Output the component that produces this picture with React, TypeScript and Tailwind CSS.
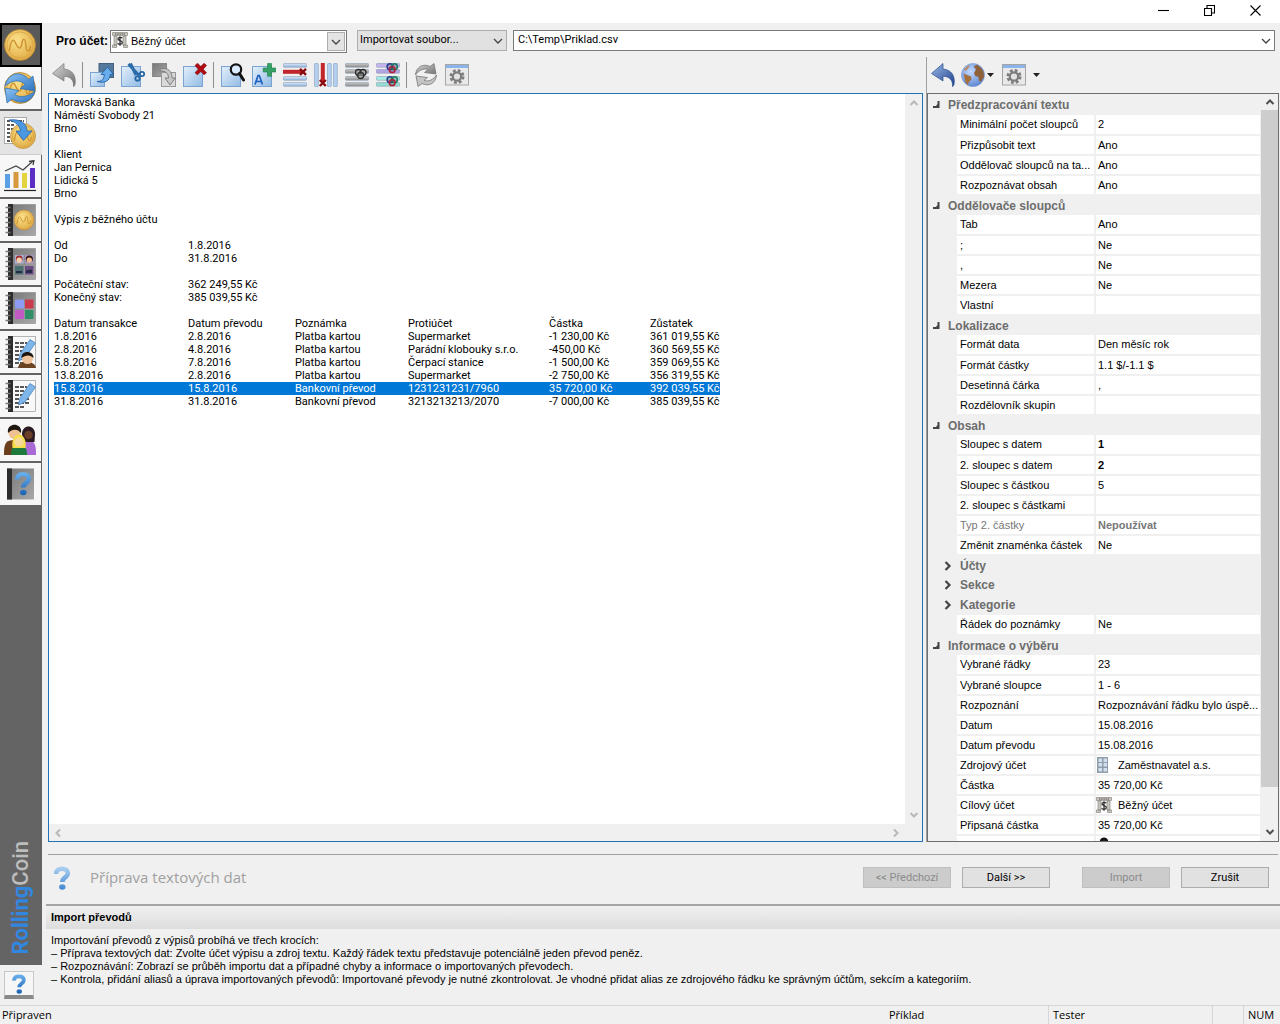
import type { ReactNode } from 'react';

const TAHOMA = "font-['Roboto','Noto_Sans',sans-serif]";
const SANS = "font-['Liberation_Sans',Arial,sans-serif]";

function Svg({ children, size = 'size-6' }: { children: ReactNode; size?: string }) {
  return (
    <svg viewBox="0 0 24 24" className={`${size} shrink-0`} aria-hidden="true">
      {children}
    </svg>
  );
}

function Defs() {
  return (
    <svg width="0" height="0" className="absolute" aria-hidden="true">
      <defs>
        <linearGradient id="sheet" x1="0" y1="0" x2="1" y2="1">
          <stop offset="0" stopColor="#e4f0fc" />
          <stop offset="1" stopColor="#92bbe4" />
        </linearGradient>
        <linearGradient id="bluearrow" x1="0" y1="0" x2="1" y2="1">
          <stop offset="0" stopColor="#8cc4f4" />
          <stop offset="1" stopColor="#2f74c0" />
        </linearGradient>
        <linearGradient id="navy" x1="0" y1="0" x2="1" y2="1">
          <stop offset="0" stopColor="#9cb8e8" />
          <stop offset="1" stopColor="#1d3f8c" />
        </linearGradient>
        <linearGradient id="grayarrow" x1="0" y1="0" x2="1" y2="1">
          <stop offset="0" stopColor="#d8d8d8" />
          <stop offset="1" stopColor="#6e6e6e" />
        </linearGradient>
        <linearGradient id="bar" x1="0" y1="0" x2="0" y2="1">
          <stop offset="0" stopColor="#d9e9fa" />
          <stop offset="1" stopColor="#8fb1d8" />
        </linearGradient>
        <linearGradient id="graybar" x1="0" y1="0" x2="0" y2="1">
          <stop offset="0" stopColor="#c9c9c9" />
          <stop offset="1" stopColor="#8b8b8b" />
        </linearGradient>
        <linearGradient id="cover" x1="0" y1="0" x2="1" y2="1">
          <stop offset="0" stopColor="#777" />
          <stop offset="1" stopColor="#a8a8a8" />
        </linearGradient>
        <radialGradient id="gold" cx="0.4" cy="0.35" r="0.8">
          <stop offset="0" stopColor="#fbe08a" />
          <stop offset="1" stopColor="#dca43a" />
        </radialGradient>
        <radialGradient id="ocean" cx="0.4" cy="0.35" r="0.7">
          <stop offset="0" stopColor="#c4daff" />
          <stop offset="1" stopColor="#5b84d2" />
        </radialGradient>
        <linearGradient id="question" gradientUnits="userSpaceOnUse" x1="12" y1="0" x2="12" y2="24">
          <stop offset="0" stopColor="#6fb4ee" />
          <stop offset="1" stopColor="#1760b4" />
        </linearGradient>
        <linearGradient id="paleq" gradientUnits="userSpaceOnUse" x1="12" y1="0" x2="12" y2="24">
          <stop offset="0" stopColor="#b4d4f2" />
          <stop offset="1" stopColor="#3f86d2" />
        </linearGradient>
      </defs>
    </svg>
  );
}

/* ---------- toolbar icons ---------- */

const Undo = ({ fill = 'url(#grayarrow)', stroke = '#777' }: { fill?: string; stroke?: string }) => (
  <Svg>
    <path d="M0.500 10.500 12 0.500v5.500c8 0.800 12.500 6 11 15.500-0.300 1-0.800 1.700-1.500 2.200C22 17 18.500 13.500 12 13.300v4.700z" fill={fill} stroke={stroke} strokeWidth="0.700" />
  </Svg>
);
const Sheet = () => <rect x="0.500" y="3.500" width="19" height="20" fill="url(#sheet)" stroke="#7aa3cf" />;
const MoveOut = () => (
  <Svg>
    <rect x="9" y="0.500" width="14.500" height="14" fill="#54789c" stroke="#44617f" />
    <rect x="0.500" y="9.500" width="14" height="14" fill="url(#sheet)" stroke="#7aa3cf" />
    <path d="M7 18.500c5 0 7-2 7.300-7H11l6.500-7.500 6 7.500h-3.200c-0.500 7-6 9-13.300 7z" fill="#69aceb" stroke="#2462a4" strokeWidth="0.900" />
  </Svg>
);
const Cut = () => (
  <Svg>
    <Sheet />
    <path d="M7.500 1 18 12.500M9.500 0.500 15 12" fill="none" stroke="#2b6ca8" strokeWidth="3" />
    <circle cx="21" cy="11" r="2.200" fill="none" stroke="#2466a4" strokeWidth="1.800" />
    <circle cx="16.500" cy="15.500" r="2.200" fill="none" stroke="#2466a4" strokeWidth="1.800" />
  </Svg>
);
const CopyGray = () => (
  <Svg>
    <rect x="0.500" y="0.500" width="14" height="13" fill="url(#cover)" stroke="#888" />
    <rect x="9.500" y="9.500" width="14" height="14" fill="#d9d9d9" stroke="#999" />
    <path d="M8 6c8-2 12 2 12 9h3.300L18 22l-5-7h3.500C16.500 10 13 7.500 8 8z" fill="#c6c6c6" stroke="#777" strokeWidth="0.900" />
  </Svg>
);
const Remove = () => (
  <Svg>
    <Sheet />
    <path d="m12 2.500 2.500-2.300 3.300 3.200 3.400-3.200L23.500 2.500l-3.300 3.700 3.300 3.600-2.400 2-3.300-3.200-3.300 3.200-2.500-2 3.300-3.600z" fill="#b00c12" stroke="#7e0509" strokeWidth="0.600" />
  </Svg>
);
const Find = () => (
  <Svg>
    <Sheet />
    <circle cx="15" cy="6.500" r="5.200" fill="#dcecff" stroke="#151515" strokeWidth="2.200" />
    <path d="m18.500 10.500 4 6.500" stroke="#111" strokeWidth="3" strokeLinecap="round" />
  </Svg>
);
const AddText = () => (
  <Svg>
    <Sheet />
    <path d="m3 21.500 3-9h1.300l3.200 9M4 18.500h5.500" fill="none" stroke="#1f5fc0" strokeWidth="1.700" />
    <path d="M15.500 0.500h4v4.500h4.300v4h-4.300v4.300h-4V9h-4.300V5h4.300z" fill="#35a164" stroke="#1f7d48" strokeWidth="0.600" />
  </Svg>
);
const RowBar = ({ y, fill = 'url(#bar)' }: { y: number; fill?: string }) => (
  <rect x="0.300" y={y} width="23.400" height="3.800" rx="1" fill={fill} stroke="#7c92ac" strokeWidth="0.500" />
);
const RemoveRow = () => (
  <Svg>
    <RowBar y={0.5} /><RowBar y={13.5} /><RowBar y={19.5} />
    <rect x="0" y="6.800" width="19" height="4" fill="#c2252b" />
    <path d="m17 5.800 6 6m0-6-6 6" stroke="#8a0a0e" strokeWidth="2.400" />
  </Svg>
);
const RemoveCol = () => (
  <Svg>
    {[0.500, 13.500, 19.500].map((x) => (
      <rect key={x} x={x} y="0.300" width="3.800" height="23.400" rx="1" fill="#b5d0ef" stroke="#6f90b8" strokeWidth="0.500" />
    ))}
    <rect x="6.800" y="0" width="4" height="19" fill="#c2252b" />
    <path d="m5.800 17 6 6m0-6-6 6" stroke="#8a0a0e" strokeWidth="2.400" />
  </Svg>
);
const GroupRow = () => (
  <Svg>
    {[0.5, 6.5, 13.5, 19.5].map((y) => <RowBar key={y} y={y} fill="url(#graybar)" />)}
    <g fill="#aaa" fillOpacity="0.500" stroke="#2b2b2b" strokeWidth="1.300">
      <circle cx="13.500" cy="9.500" r="3" /><circle cx="18" cy="9.500" r="3" /><circle cx="15.700" cy="12.500" r="3" />
    </g>
  </Svg>
);
const GroupMulti = () => (
  <Svg>
    <RowBar y={0.5} fill="#c3b4ee" /><RowBar y={6.5} fill="#b3a4e4" />
    <RowBar y={13.5} fill="#a6ebe2" /><RowBar y={19.5} fill="#97dcd2" />
    {[0, 13].map((dy) => (
      <g key={dy} fill="#445" fillOpacity="0.250" strokeWidth="1.500">
        <circle cx="14" cy={3.7 + dy} r="2.900" stroke="#273c8c" />
        <circle cx="18.500" cy={3.7 + dy} r="2.900" stroke="#1c7a5a" />
        <circle cx="16.200" cy={6.7 + dy} r="2.900" stroke="#b2203a" />
      </g>
    ))}
  </Svg>
);
const RefreshGray = () => (
  <Svg>
    <path d="M1.500 12C2 4 9 0 16 3.500L20 0.500 22 11 10.500 9.500l3.500-3C9 5 4.500 7.500 1.500 12z" fill="url(#grayarrow)" stroke="#777" strokeWidth="0.800" />
    <path d="M22.500 12C22 20 15 24 8 20.500L4 23.500 2 13l11.500 1.500-3.500 3c5 1.500 9.500-1 12.500-5.500z" fill="#c4c4c4" stroke="#777" strokeWidth="0.800" />
  </Svg>
);
const GearWindow = () => (
  <Svg>
    <rect x="0.500" y="1.500" width="23" height="20.500" fill="#e9e9e9" stroke="#a5a5a5" />
    <rect x="1" y="2" width="22" height="3" fill="#8db4ea" />
    <circle cx="12" cy="13.500" r="6.200" fill="none" stroke="#7c7c7c" strokeWidth="2.600" strokeDasharray="2.800 2.070" />
    <circle cx="12" cy="13.500" r="4.200" fill="#e2e2e2" stroke="#7c7c7c" strokeWidth="2.200" />
  </Svg>
);
const Globe = () => (
  <Svg>
    <circle cx="12" cy="12" r="11.500" fill="url(#ocean)" stroke="#7593cc" strokeWidth="0.600" />
    <path d="M2.500 10.500 6 12l4 1.500 0.500 3L7.500 19.500 7 22.500 4.500 19 3.500 15z" fill="#a3703e" />
    <path d="M3 6.500 6.500 3 9 2 7.500 5 4.500 8z" fill="#b98a5c" />
    <path d="M12.500 3.500 16 1.800l4 3 2.500 4 0.500 5-3 5-2-1-0.500-4-3-0.500-1.500-3 2-4z" fill="#8f6138" />
  </Svg>
);

/* ---------- small icons ---------- */

const Chevron = ({ className = '', bold = false }: { className?: string; bold?: boolean }) => (
  <svg viewBox="0 0 10 6" className={`h-1.5 w-2.5 ${className}`} aria-hidden="true">
    <path d={bold ? 'm1.500 1 3.500 3.500L8.500 1' : 'm1 1 4 4 4-4'} fill="none" stroke="currentColor" strokeWidth={bold ? 2 : 1.3} />
  </svg>
);
const BankIcon = () => (
  <svg viewBox="0 0 16 16" className="size-4 shrink-0" aria-hidden="true">
    <path d="M0.500 0.500h15v3h-15zM2 4h3v9H2zM11 4h3v9h-3zM0.500 13h4v2.500h-4zM11.500 13h4v2.500h-4z" fill="#c9c5c0" stroke="#8b8680" strokeWidth="0.700" />
    <path d="M3 2h10" stroke="#555" strokeWidth="1.200" strokeDasharray="1.500 0.700" />
    <path d="M10.300 6.200C9.500 5 6 5 6 7s4.300 1.400 4.300 3.500S6.500 12.700 5.700 11.300M8 4.300v9.400" fill="none" stroke="#333" strokeWidth="1.300" />
  </svg>
);
const BuildingIcon = () => (
  <svg viewBox="0 0 16 16" className="size-4 shrink-0" aria-hidden="true">
    <rect x="1" y="0" width="11" height="16" fill="#8f9caa" />
    <path d="M2.500 1.500h3.500v3.500H2.500zM7.500 1.500H11v3.500H7.500zM2.500 6H6v3.500H2.500zM7.500 6H11v3.500H7.500zM2.500 11H6v3.500H2.500zM7.500 11H11v3.500H7.500z" fill="#d2e0ee" />
  </svg>
);
const PersonIcon = () => (
  <svg viewBox="0 0 16 16" className="size-4 shrink-0" aria-hidden="true">
    <path d="M3.500 7c0-5 2-6.500 4.500-6.500S12.500 2 12.500 7v3h-9z" fill="#111" />
    <circle cx="8" cy="6.500" r="2.800" fill="#d9b08c" />
  </svg>
);
const QuestionMark = ({ fill = 'url(#question)' }: { fill?: string }) => (
  <>
    <path d="M6.200 8C6 4.200 8.500 2.800 12 2.800c3.500 0 5.800 1.600 5.800 4.400 0 4.300-5.500 4-5.500 8.800" fill="none" stroke={fill} strokeWidth="4.600" />
    <ellipse cx="12.300" cy="21" rx="3.200" ry="2.700" fill={fill} />
  </>
);

/* ---------- side bar icons (32 x 32) ---------- */

const Big = ({ children }: { children: ReactNode }) => (
  <svg viewBox="0 0 32 32" className="size-8 shrink-0" aria-hidden="true">{children}</svg>
);
const Coin = ({ x = 16, y = 16, r = 15.5 }: { x?: number; y?: number; r?: number }) => (
  <g transform={`translate(${x} ${y}) scale(${r / 16})`}>
    <circle r="16" fill="url(#gold)" stroke="#b98328" strokeWidth="0.800" />
    <circle r="13.500" fill="none" stroke="#d39c3b" strokeWidth="0.700" />
    <path d="M-11 6c1-8 2-11 4-11 2.500 0 3 8 6.500 8S1-6 4-6s1 12 4 12 2-3 3-5" fill="none" stroke="#cf9632" strokeWidth="1.600" />
  </g>
);
const Book = ({ children, page = false }: { children?: ReactNode; page?: boolean }) => (
  <Big>
    <rect x="5" y="0.500" width="26.500" height="31" fill={page ? '#f8f8f8' : 'url(#cover)'} stroke="#888" strokeWidth="0.600" />
    <rect x="4" y="0" width="5" height="32" fill="#2d2d2d" />
    <path d="M1.500 3.500h5m-5 5h5m-5 5h5m-5 5h5m-5 5h5m-5 5h5" stroke="#777" strokeWidth="1.700" />
    {children}
  </Big>
);
const Lines = () => (
  <path d="M11 7h12M11 11h10M11 15h10M11 19h14M11 23h14M11 27h9" stroke="#222" strokeWidth="1.500" strokeDasharray="4 1" />
);
const Pencil = () => (
  <path d="m14.500 25 1.500-7L26 3.500l5.500 3.500L21 22z" fill="#7fb6ea" stroke="#4a86c2" strokeWidth="0.800" />
);

const SIDE: { label: string; icon: ReactNode; state?: 'current' | 'hover' }[] = [
  { label: 'Přehled', state: 'current', icon: <Big><Coin /></Big> },
  {
    label: 'Synchronizace',
    icon: (
      <Big>
        <Coin />
        <path d="M1 14C3 4 12-1 20 3.500c2 1 3.500 2.500 4.500 4L29 4l2 15-15-2.500 5-4C16 7 8 8 1 14z" fill="url(#bluearrow)" stroke="#2d6cb0" strokeWidth="0.700" />
        <path d="M31 19c-2 9-10 13-18 10.500-2-0.500-3.500-1.500-5-2.500l-5 4L1 16l14 2.500-4.500 4C16 26 24 25 31 19z" fill="url(#bluearrow)" stroke="#2d6cb0" strokeWidth="0.700" />
      </Big>
    ),
  },
  {
    label: 'Import převodů',
    state: 'hover',
    icon: (
      <Big>
        <rect x="0.500" y="0.500" width="22" height="26" fill="#fff" stroke="#aaa" />
        <path d="M3 4h17M3 8h8M3 12h7M3 16h5M3 20h5M3 24h6" stroke="#222" strokeWidth="1.600" strokeDasharray="3 1" />
        <Coin x={19} y={19} r={12.5} />
        <path d="M5 3c11-1.500 18 3 18 11h5l-8.500 9.500L12 14h4.500C16 9 12 5 5 3z" fill="#4b97e2" stroke="#2763a8" strokeWidth="0.800" />
      </Big>
    ),
  },
  {
    label: 'Grafy',
    icon: (
      <Big>
        <rect x="1" y="14" width="5" height="14" fill="#5aa0e4" />
        <rect x="9.500" y="12" width="5" height="16" fill="#d69a3c" />
        <rect x="18" y="13" width="5" height="15" fill="#e2d43c" />
        <rect x="26" y="8" width="5" height="20" fill="#5a2cc4" />
        <path d="m1 11 11-5 7 4L29 1m-4 0.500L30 0.500 29 5" fill="none" stroke="#444" strokeWidth="1.300" />
        <path d="M0 30.500h32" stroke="#222" strokeWidth="1.200" />
      </Big>
    ),
  },
  { label: 'Účty', icon: <Book><Coin x={20} y={16} r={10} /></Book> },
  {
    label: 'Osoby',
    icon: (
      <Book>
        <rect x="11" y="7" width="8.500" height="8.500" fill="#a9b2dd" /><rect x="21" y="7" width="8.500" height="8.500" fill="#a895c8" />
        <rect x="11" y="18" width="8.500" height="8.500" fill="#4a6f70" /><rect x="21" y="18" width="8.500" height="8.500" fill="#6a4b83" />
        <circle cx="15.200" cy="11" r="3.400" fill="#a32b2b" /><circle cx="15.200" cy="12.300" r="2.700" fill="#f2cfb0" />
        <circle cx="25.300" cy="11" r="3.600" fill="#34160e" /><circle cx="25.300" cy="12.300" r="2.700" fill="#eebd98" />
        <path d="M12 23h6v2h-6zM22 22.500l6-1v3.500h-6z" fill="#252b44" />
      </Book>
    ),
  },
  {
    label: 'Kategorie',
    icon: (
      <Book>
        <rect x="11" y="7.500" width="9" height="9" rx="0.800" fill="#8f9cf4" /><rect x="21" y="7.500" width="8.500" height="9" rx="0.800" fill="#cc3a4c" />
        <rect x="11" y="18" width="9" height="9" rx="0.800" fill="#c35ac4" /><rect x="21" y="18" width="8.500" height="9" rx="0.800" fill="#2f9068" />
      </Book>
    ),
  },
  {
    label: 'Aliasy',
    icon: (
      <Book page>
        <Lines /><Pencil />
        <path d="M14 32c1-5 3-6 8-6s9 1 10 6z" fill="#6b4322" />
        <circle cx="23.500" cy="22.500" r="5.500" fill="#efc49c" />
        <path d="M17.500 22c-1-8 12.500-8 12 0-3-3.500-8-3.500-12 0z" fill="#1e1410" />
      </Book>
    ),
  },
  { label: 'Poznámky', icon: <Book page><Lines /><Pencil /></Book> },
  {
    label: 'Uživatelé',
    icon: (
      <Big>
        <path d="M0 31c0-12 2-15 10-15s8 3 9 15z" fill="#6b3f1c" />
        <circle cx="10.500" cy="9" r="6" fill="#edc193" /><path d="M4 9C2-2 19-2 17 9c-3-4.500-9-4.500-13 0z" fill="#1f1712" />
        <path d="M18 31c0-10 1-14 7-14s7 4 7 14z" fill="#a868d6" />
        <path d="M18 10c0-10 13-10 13 0l-0.500 8H19z" fill="#2b1b22" /><circle cx="24.500" cy="11" r="4.200" fill="#6a3f2a" />
        <path d="M7 31c0-7 2-9 8-9s8 2 8 9z" fill="#1d7a3c" />
        <path d="M8.500 24C6 6 24 6 21.500 24z" fill="#f4dd4a" /><circle cx="15" cy="18" r="4.500" fill="#f5d99a" />
      </Big>
    ),
  },
  {
    label: 'Nápověda',
    icon: (
      <Big>
        <rect x="3" y="0.500" width="27" height="31" fill="url(#cover)" /><rect x="3" y="0.500" width="5" height="31" fill="#2d2d2d" />
        <g transform="translate(7 3.500)"><QuestionMark /></g>
      </Big>
    ),
  },
];

function Sidebar() {
  return (
    <nav className="flex w-[42px] shrink-0 flex-col bg-[#646464]">
      {SIDE.map((s) => (
        <button
          key={s.label}
          aria-label={s.label}
          className={`flex h-11 w-full shrink-0 items-center ${
            s.state === 'current'
              ? 'border-2 border-black bg-[#5a5a5a] pl-0.5'
              : s.state === 'hover'
                ? 'border-b border-[#ccc] bg-[#e4e4e4] pl-1'
                : 'border-r border-b-2 border-[#646464] bg-[#f7f7f7] pl-1'
          }`}
        >
          {s.icon}
        </button>
      ))}
      <div className="flex-1" />
      <div className="mb-2.5 rotate-180 self-center font-['Roboto',sans-serif] text-[22px] leading-7 font-bold [writing-mode:vertical-rl]">
        <span className="text-[#3187e0]">Rolling</span>
        <span className="font-medium text-[#bdbdbd]">Coin</span>
      </div>
      <div className="flex h-10 shrink-0 bg-[#f0f0f0] pt-1.5 pl-1">
        <button aria-label="Kontextová nápověda" className="flex h-7 w-[30px] items-center justify-center border border-b-4 border-[#c8c8c8] border-b-[#8a8a8a] bg-[#f6f6f6]">
          <Svg size="size-5"><QuestionMark /></Svg>
        </button>
      </div>
    </nav>
  );
}

function ToolButton({ label, children }: { label: string; children: ReactNode }) {
  return (
    <button aria-label={label} title={label} className="flex h-[30px] w-[31px] shrink-0 items-center justify-center">
      {children}
    </button>
  );
}
const Sep = () => <div className="mx-[3px] h-[26px] w-px shrink-0 bg-[#8c8c8c]" />;

function SourceBar() {
  return (
    <div className={`flex h-[34px] items-start pt-[7px] pr-[5px] pl-3.5 text-xs ${TAHOMA}`}>
      <label htmlFor="account" className={`mr-0.5 flex h-[23px] w-[52px] items-center pb-0.5 text-xs font-bold whitespace-nowrap ${SANS}`}>Pro účet:</label>
      <div className="relative w-[237px] shrink-0">
        <select id="account" className={`block h-[23px] w-full appearance-none border border-[#7a7a7a] bg-white pl-5 text-[11px] ${SANS}`}>
          <option>Běžný účet</option>
        </select>
        <span className="pointer-events-none absolute top-0.5 left-0.5"><BankIcon /></span>
        <span className="pointer-events-none absolute top-0.5 right-0.5 flex h-[19px] w-[18px] items-center justify-center border border-[#adadad] bg-[#e3e3e3] text-[#444]"><Chevron /></span>
      </div>
      <div className="relative ml-2.5 w-[150px] shrink-0">
        <select aria-label="Zdroj textu" className="block h-[21px] w-full appearance-none border border-[#adadad] bg-[#e1e1e1] pl-0.5 text-[11px]">
          <option>Importovat soubor...</option>
        </select>
        <Chevron className="pointer-events-none absolute top-2 right-1 text-[#444]" />
      </div>
      <div className="relative ml-1.5 flex-1">
        <select aria-label="Soubor" className="block h-[21px] w-full appearance-none border border-[#7a7a7a] bg-white pl-1 text-[11px]">
          <option>C:\Temp\Priklad.csv</option>
        </select>
        <Chevron className="pointer-events-none absolute top-2 right-1 text-[#444]" />
      </div>
    </div>
  );
}

const TRANSACTIONS = [
  ['1.8.2016', '2.8.2016', 'Platba kartou', 'Supermarket', '-1 230,00 Kč', '361 019,55 Kč'],
  ['2.8.2016', '4.8.2016', 'Platba kartou', 'Parádní klobouky s.r.o.', '-450,00 Kč', '360 569,55 Kč'],
  ['5.8.2016', '7.8.2016', 'Platba kartou', 'Čerpací stanice', '-1 500,00 Kč', '359 069,55 Kč'],
  ['13.8.2016', '2.8.2016', 'Platba kartou', 'Supermarket', '-2 750,00 Kč', '356 319,55 Kč'],
  ['15.8.2016', '15.8.2016', 'Bankovní převod', '1231231231/7960', '35 720,00 Kč', '392 039,55 Kč'],
  ['31.8.2016', '31.8.2016', 'Bankovní převod', '3213213213/2070', '-7 000,00 Kč', '385 039,55 Kč'],
];
const SELECTED = 4;

const Pair = ({ name, value }: { name: string; value: string }) => (
  <div className="flex"><dt className="w-[134px]">{name}</dt><dd>{value}</dd></div>
);

function TextPreview() {
  return (
    <div className="flex min-h-0 flex-1 flex-col border border-[#1f72b8] bg-white">
      <div className="flex min-h-0 flex-1">
        <div className={`min-w-0 flex-1 overflow-hidden pt-[2px] pl-[5px] text-[11px] leading-[13px] whitespace-nowrap text-black ${TAHOMA}`}>
          <p className="mb-[13px]">Moravská Banka<br />Náměstí Svobody 21<br />Brno</p>
          <p className="mb-[13px]">Klient<br />Jan Pernica<br />Lidická 5<br />Brno</p>
          <p className="mb-[13px]">Výpis z běžného účtu</p>
          <dl className="mb-[13px]"><Pair name="Od" value="1.8.2016" /><Pair name="Do" value="31.8.2016" /></dl>
          <dl className="mb-[13px]"><Pair name="Počáteční stav:" value="362 249,55 Kč" /><Pair name="Konečný stav:" value="385 039,55 Kč" /></dl>
          <table className="w-[666px] table-fixed border-collapse text-left">
            <colgroup>
              <col className="w-[134px]" /><col className="w-[107px]" /><col className="w-[113px]" />
              <col className="w-[141px]" /><col className="w-[101px]" /><col className="w-[70px]" />
            </colgroup>
            <thead>
              <tr>
                {['Datum transakce', 'Datum převodu', 'Poznámka', 'Protiúčet', 'Částka', 'Zůstatek'].map((h) => (
                  <th key={h} className="p-0 font-normal">{h}</th>
                ))}
              </tr>
            </thead>
            <tbody>
              {TRANSACTIONS.map((row, i) => (
                <tr key={i} className={i === SELECTED ? 'bg-[#0078d7] text-white' : ''}>
                  {row.map((c, j) => <td key={j} className="p-0">{c}</td>)}
                </tr>
              ))}
            </tbody>
          </table>
        </div>
        <div className="flex w-[17px] shrink-0 flex-col items-center justify-between bg-[#f0f0f0] py-1.5 text-[#b8b8b8]">
          <Chevron bold className="rotate-180" /><Chevron bold />
        </div>
      </div>
      <div className="flex h-[17px] shrink-0 items-center justify-between bg-[#f0f0f0] pr-[21px] pl-1 text-[#b8b8b8]">
        <Chevron bold className="rotate-90" /><Chevron bold className="-rotate-90" />
      </div>
    </div>
  );
}

type Prop = { k: 'head' | 'sub' | 'row'; n: string; v?: string; bold?: boolean; gray?: boolean; icon?: ReactNode };
const PROPS: Prop[] = [
  { k: 'head', n: 'Předzpracování textu' },
  { k: 'row', n: 'Minimální počet sloupců', v: '2' },
  { k: 'row', n: 'Přizpůsobit text', v: 'Ano' },
  { k: 'row', n: 'Oddělovač sloupců na ta...', v: 'Ano' },
  { k: 'row', n: 'Rozpoznávat obsah', v: 'Ano' },
  { k: 'head', n: 'Oddělovače sloupců' },
  { k: 'row', n: 'Tab', v: 'Ano' },
  { k: 'row', n: ';', v: 'Ne' },
  { k: 'row', n: ',', v: 'Ne' },
  { k: 'row', n: 'Mezera', v: 'Ne' },
  { k: 'row', n: 'Vlastní' },
  { k: 'head', n: 'Lokalizace' },
  { k: 'row', n: 'Formát data', v: 'Den měsíc rok' },
  { k: 'row', n: 'Formát částky', v: '1.1 $/-1.1 $' },
  { k: 'row', n: 'Desetinná čárka', v: ',' },
  { k: 'row', n: 'Rozdělovník skupin' },
  { k: 'head', n: 'Obsah' },
  { k: 'row', n: 'Sloupec s datem', v: '1', bold: true },
  { k: 'row', n: '2. sloupec s datem', v: '2', bold: true },
  { k: 'row', n: 'Sloupec s částkou', v: '5' },
  { k: 'row', n: '2. sloupec s částkami' },
  { k: 'row', n: 'Typ 2. částky', v: 'Nepoužívat', bold: true, gray: true },
  { k: 'row', n: 'Změnit znaménka částek', v: 'Ne' },
  { k: 'sub', n: 'Účty' },
  { k: 'sub', n: 'Sekce' },
  { k: 'sub', n: 'Kategorie' },
  { k: 'row', n: 'Řádek do poznámky', v: 'Ne' },
  { k: 'head', n: 'Informace o výběru' },
  { k: 'row', n: 'Vybrané řádky', v: '23' },
  { k: 'row', n: 'Vybrané sloupce', v: '1 - 6' },
  { k: 'row', n: 'Rozpoznání', v: 'Rozpoznávání řádku bylo úspě...' },
  { k: 'row', n: 'Datum', v: '15.08.2016' },
  { k: 'row', n: 'Datum převodu', v: '15.08.2016' },
  { k: 'row', n: 'Zdrojový účet', v: 'Zaměstnavatel a.s.', icon: <BuildingIcon /> },
  { k: 'row', n: 'Částka', v: '35 720,00 Kč' },
  { k: 'row', n: 'Cílový účet', v: 'Běžný účet', icon: <BankIcon /> },
  { k: 'row', n: 'Připsaná částka', v: '35 720,00 Kč' },
  { k: 'row', n: 'Sekce', v: 'Klient', icon: <PersonIcon /> },
];

function PropertyGrid() {
  return (
    <div className="flex min-h-0 flex-1 border border-[#6d6d6d] bg-[#f0f0f0]">
      <div className="min-w-0 flex-1 overflow-hidden pt-px pr-px">
        <table className={`w-full table-fixed border-collapse text-left text-[11px] ${SANS}`}>
          <colgroup><col className="w-[29px]" /><col className="w-[138px]" /><col /></colgroup>
          <tbody>
            {PROPS.map((p, i) =>
              p.k === 'row' ? (
                <tr key={i} className={`h-5 ${p.gray ? 'text-[#777]' : 'text-black'}`}>
                  <td className="p-0" />
                  <th scope="row" className="border-r-2 border-b-2 border-[#f0f0f0] bg-white py-0 pr-0 pl-[3px] font-normal whitespace-nowrap">{p.n}</th>
                  <td className={`h-5 border-b-2 border-[#f0f0f0] bg-white p-0 ${p.icon ? '' : 'pl-0.5'} ${p.bold ? 'font-bold' : ''}`}>
                    <div className="flex h-4 items-center gap-1.5">
                      {p.icon}
                      <span className="whitespace-nowrap">{p.v}</span>
                    </div>
                  </td>
                </tr>
              ) : (
                <tr key={i} className="h-5 text-[#6d6d6d]">
                  <th scope="rowgroup" colSpan={3} className={`p-0 text-xs font-bold ${p.k === 'sub' ? 'pl-4' : 'pl-1'}`}>
                    <button className="flex items-center gap-2">
                      <svg viewBox="0 0 8 10" className="h-2.5 w-2" aria-hidden="true">
                        {p.k === 'sub'
                          ? <path d="m1.500 1 4 4-4 4" fill="none" stroke="#444" strokeWidth="2.200" />
                          : <path d="M7.500 1v7H1V6h3l1.500-2V1z" fill="#444" />}
                      </svg>
                      <span>{p.n}</span>
                    </button>
                  </th>
                </tr>
              ),
            )}
          </tbody>
        </table>
      </div>
      <div className="flex w-[17px] shrink-0 flex-col items-center bg-[#f0f0f0] pt-[5px] text-[#505050]">
        <Chevron bold className="shrink-0 rotate-180" />
        <div className="mt-[5px] min-h-0 w-full flex-1 bg-[#cdcdcd]" />
        <div className="flex h-[54px] items-end pb-1.5"><Chevron bold /></div>
      </div>
    </div>
  );
}

function Workspace() {
  const dropArrow = <svg viewBox="0 0 7 4" className="h-1 w-[7px]" aria-hidden="true"><path d="M0 0h7L3.500 4z" fill="#222" /></svg>;
  return (
    <div className="flex min-h-0 flex-1">
      <section className="mr-[3px] flex min-w-0 flex-1 flex-col pl-1.5">
        <div className="flex h-9 items-center">
          <ToolButton label="Zpět"><Undo /></ToolButton>
          <Sep />
          <ToolButton label="Načíst"><MoveOut /></ToolButton>
          <ToolButton label="Vyjmout"><Cut /></ToolButton>
          <ToolButton label="Kopírovat"><CopyGray /></ToolButton>
          <ToolButton label="Odstranit"><Remove /></ToolButton>
          <Sep />
          <ToolButton label="Najít"><Find /></ToolButton>
          <ToolButton label="Přidat text"><AddText /></ToolButton>
          <ToolButton label="Odstranit řádek"><RemoveRow /></ToolButton>
          <ToolButton label="Odstranit sloupec"><RemoveCol /></ToolButton>
          <ToolButton label="Sloučit řádky"><GroupRow /></ToolButton>
          <ToolButton label="Sloučit skupiny"><GroupMulti /></ToolButton>
          <Sep />
          <ToolButton label="Obnovit"><RefreshGray /></ToolButton>
          <ToolButton label="Nastavení"><GearWindow /></ToolButton>
        </div>
        <TextPreview />
      </section>
      <section className="mr-px flex w-[353px] shrink-0 flex-col border-l border-[#a0a0a0]">
        <div className="flex h-9 items-center">
          <ToolButton label="Vrátit"><Undo fill="url(#navy)" stroke="#29508f" /></ToolButton>
          <button aria-label="Jazyk" className="ml-[3px] flex items-center gap-0.5"><Globe />{dropArrow}</button>
          <button aria-label="Profil" className="ml-2 flex items-center gap-[7px]"><GearWindow />{dropArrow}</button>
        </div>
        <PropertyGrid />
      </section>
    </div>
  );
}

const STEP_BTN = 'h-[21px] w-[88px] border text-[11px] leading-none';

export default function App() {
  return (
    <div className="flex h-screen flex-col overflow-hidden bg-[#f0f0f0] text-black">
      <Defs />
      <header className="flex h-[23px] shrink-0 justify-end bg-white pr-0.5 pb-0.5">
        {[
          ['Minimalizovat', 'M0 5.500h11'],
          ['Obnovit okno', 'M0.500 3.500h7v7h-7zM3 3V0.500h7.500V8H8'],
          ['Zavřít', 'M0.500 0.500l10 10M10.500 0.500l-10 10'],
        ].map(([label, d]) => (
          <button key={label} aria-label={label} className="flex w-[46px] items-center justify-center">
            <svg viewBox="0 0 11 11" className="size-[11px]" aria-hidden="true"><path d={d} fill="none" stroke="#000" strokeWidth="1.100" /></svg>
          </button>
        ))}
      </header>
      <div className="flex min-h-0 flex-1">
        <Sidebar />
        <main className="flex min-w-0 flex-1 flex-col">
          <SourceBar />
          <Workspace />
          <footer className="mt-3 mr-0.5 ml-1.5 flex h-[50px] shrink-0 items-center border-t border-[#a0a0a0] pr-[9px] pb-1 pl-0.5">
            <Svg><QuestionMark fill="url(#paleq)" /></Svg>
            <h1 className="ml-4 flex-1 font-['Open_Sans',sans-serif] text-[15px] text-[#a0a0a0]">Příprava textových dat</h1>
            <div className={`flex ${TAHOMA}`}>
              <button disabled className={`${STEP_BTN} border-[#bfbfbf] bg-[#ccc] text-[#8b8b8b]`}>&lt;&lt; Předchozí</button>
              <button className={`${STEP_BTN} ml-[11px] border-[#adadad] bg-[#e1e1e1]`}>Další &gt;&gt;</button>
              <button disabled className={`${STEP_BTN} ml-8 border-[#bfbfbf] bg-[#ccc] text-[#8b8b8b]`}>Import</button>
              <button className={`${STEP_BTN} ml-[11px] border-[#adadad] bg-[#e1e1e1]`}>Zrušit</button>
            </div>
          </footer>
          <section className={`ml-1 h-[101px] shrink-0 border-t-2 border-[#a5a5a5] ${SANS}`}>
            <h2 className="flex h-[23px] items-center border-b border-[#ddd] bg-linear-to-b from-[#f0f0f0] to-[#dedede] pl-[5px] text-[11px] font-bold">Import převodů</h2>
            <div className="pt-[5px] pl-[5px] text-[11px] leading-[13px]">
              <p>Importování převodů z výpisů probíhá ve třech krocích:</p>
              <ul>
                <li>– Příprava textových dat: Zvolte účet výpisu a zdroj textu. Každý řádek textu představuje potenciálně jeden převod peněz.</li>
                <li>– Rozpoznávání: Zobrazí se průběh importu dat a případné chyby a informace o importovaných převodech.</li>
                <li>– Kontrola, přidání aliasů a úprava importovaných převodů: Importované převody je nutné zkontrolovat. Je vhodné přidat alias ze zdrojového řádku ke správným účtům, sekcím a kategoriím.</li>
              </ul>
            </div>
          </section>
        </main>
      </div>
      <div className="flex h-[19px] shrink-0 items-center border-t border-[#d7d7d7] font-['Open_Sans',sans-serif] text-[11px] leading-[18px]">
        <span className="flex-1 pl-0.5">Připraven</span>
        <span className="w-[159px]">Příklad</span>
        <span className="w-[164px] border-l border-[#d7d7d7] pl-1">Tester</span>
        <span className="h-full w-[31px] border-l border-[#d7d7d7]" />
        <span className="w-[37px] border-l border-[#d7d7d7] pl-1">NUM</span>
      </div>
    </div>
  );
}
